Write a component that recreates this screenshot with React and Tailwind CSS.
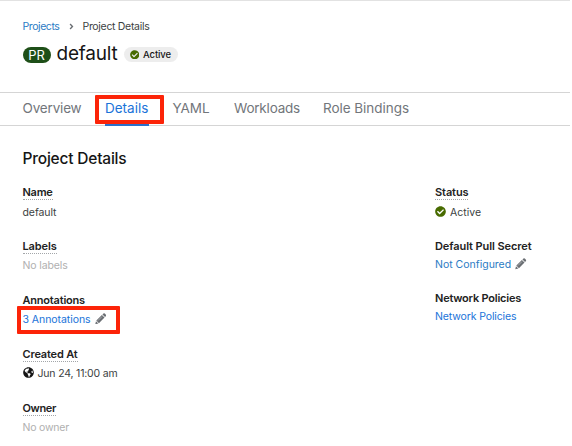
import { FaAngleRight, FaCheckCircle, FaGlobeAmericas } from 'react-icons/fa';

function Pencil() {
  return (
    <svg viewBox="0 0 12 12" className="-mt-[1px] ml-[4px] size-[11.5px] text-[#6a6e73]" fill="currentColor" aria-hidden="true">
      <path d="M0.3 11.7 1 8.5 3.5 11Z" />
      <path d="M1.4 7.9 7.2 2.1 9.9 4.8 4.1 10.6Z" />
      <path d="M7.8 1.5 8.8 0.6Q9.5 0 10.2 0.6L11.4 1.8Q12 2.5 11.4 3.2L10.5 4.2Z" />
      <path d="M3.1 7.9 7.3 3.7" stroke="#d8dadb" strokeWidth="0.6" fill="none" />
    </svg>
  );
}

function Field({ label, tracking, dotted = true, className = 'h-[54px]', gap = 'mt-[4px]', children }) {
  return (
    <div className={className}>
      <div className="flex">
        <dt
          className={`h-[15px] border-b text-[11px] leading-[14px] font-semibold text-[#222] ${tracking} ${
            dotted ? 'border-dotted border-[#a3a6a9]' : 'border-transparent'
          }`}
        >
          {label}
        </dt>
      </div>
      <dd className={`flex h-4 items-center text-[10.5px] leading-[17px] ${gap}`}>{children}</dd>
    </div>
  );
}

export default function App() {
  return (
    <div className="relative h-[446px] w-[572px] overflow-hidden bg-white pr-[2px] font-['Inter',sans-serif] whitespace-nowrap text-[#3c3f42]">
      <header className="h-[92px] border-t border-[#e2e2e2] pl-[22.5px]">
        <nav className="mt-[18px] flex h-4 items-center text-[10.5px] leading-4">
          <a className="w-[46px] tracking-[-0.42px] text-[#2b7bc4]">Projects</a>
          <FaAngleRight className="-mt-[2px] -ml-[2px] size-[9px] text-[#6a6e73]" />
          <span className="ml-[7px] tracking-[-0.31px]">Project Details</span>
        </nav>
        <div className="mt-[9px] flex h-[22px] items-center">
          <span className="flex h-4 w-[28px] items-center justify-center rounded-full bg-[#1e4f18] text-[13px] leading-4 text-white">
            PR
          </span>
          <h1 className="-mt-[2px] ml-[6px] w-[61px] text-[19px] leading-[22px] tracking-[-0.2px] text-[#151515]">default</h1>
          <span className="-mt-px ml-[6px] flex h-[15px] w-[54px] items-center rounded-full bg-[#ededed] pl-[6px] text-[9.5px] leading-[15px] font-medium tracking-[-0.1px] text-[#151515]">
            <FaCheckCircle className="mr-[4px] size-[9.5px] text-[#486b00]" />
            Active
          </span>
        </div>
      </header>

      <nav className="flex h-[34px] border-y border-[#d5d5d5] pl-[22.5px] text-[13.5px] leading-[30px] text-[#72767b]">
        <a className="w-[82.5px] tracking-[-0.17px]">Overview</a>
        <a className="mr-[23.5px] h-[33px] w-[44px] border-b-[3px] border-[#2b6fc9] text-[#1a73d9]">Details</a>
        <a className="w-[61.5px] tracking-[-0.08px]">YAML</a>
        <a className="w-[89px] tracking-[-0.21px]">Workloads</a>
        <a className="tracking-[-0.04px]">Role Bindings</a>
      </nav>

      <main className="pl-[22.5px]">
        <h2 className="mt-[23px] h-5 text-[15.5px] leading-5 font-medium tracking-[-0.2px] text-[#151515]">Project Details</h2>
        <div className="mt-[16px] flex">
          <dl className="w-[412.5px]">
            <Field label="Name" tracking="tracking-[-0.27px]">
              <span className="tracking-[-0.08px]">default</span>
            </Field>
            <Field label="Labels" tracking="tracking-[-0.13px]" gap="mt-[3px]">
              <span className="tracking-[-0.13px] text-[#b0b0b0]">No labels</span>
            </Field>
            <Field label="Annotations" tracking="tracking-[-0.2px]" dotted={false} className="h-[53.5px]" gap="mt-[3px]">
              <a className="tracking-[-0.06px] text-[#1a73d9]">3 Annotations</a>
              <Pencil />
            </Field>
            <Field label="Created At" tracking="tracking-[-0.17px]">
              <FaGlobeAmericas className="-mt-[3px] mr-[4px] size-[11px] text-[#151515]" />
              <span className="tracking-[-0.18px]">Jun 24, 11:00 am</span>
            </Field>
            <Field label="Owner" tracking="tracking-[-0.36px]">
              <span className="tracking-[-0.2px] text-[#b0b0b0]">No owner</span>
            </Field>
          </dl>
          <dl>
            <Field label="Status" tracking="tracking-[-0.1px]" className="h-[53.5px]">
              <FaCheckCircle className="-mt-[2px] mr-[4px] size-[11px] text-[#486b00]" />
              <span>Active</span>
            </Field>
            <Field label="Default Pull Secret" tracking="tracking-[-0.09px]" dotted={false} className="h-[52.5px]" gap="mt-[3px]">
              <a className="text-[#2b7bc4]">Not Configured</a>
              <Pencil />
            </Field>
            <Field label="Network Policies" tracking="tracking-[-0.22px]" dotted={false} gap="mt-[2px]">
              <a className="tracking-[-0.12px] text-[#1a73d9]">Network Policies</a>
            </Field>
          </dl>
        </div>
      </main>

      <div className="absolute top-[95px] left-[95px] h-[29px] w-[69px] rounded-[1px] border-4 border-[#fc2408]" />
      <div className="absolute top-[306px] left-[17px] h-[28px] w-[103px] rounded-[1px] border-4 border-[#fc2408]" />
    </div>
  );
}
